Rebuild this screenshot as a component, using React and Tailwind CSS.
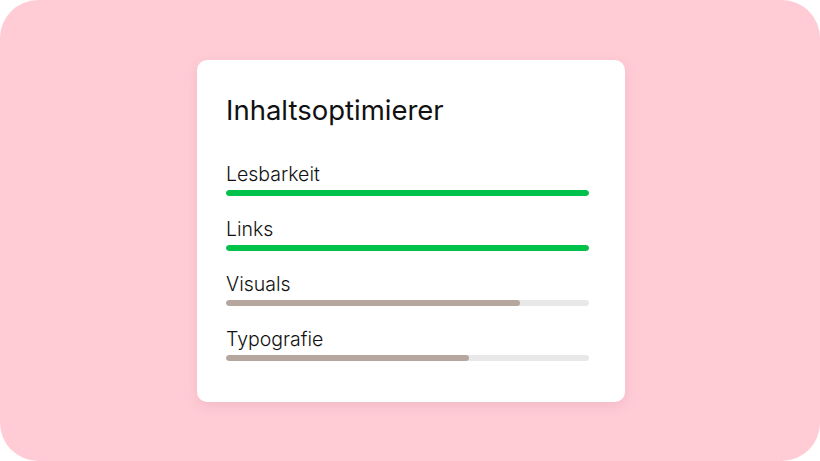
const ROWS = [
    { label: 'Lesbarkeit', value: 100, done: true },
    { label: 'Links', value: 100, done: true },
    { label: 'Visuals', value: 81, done: false },
    { label: 'Typografie', value: 67, done: false },
];

export default function App() {
    return (
        <div className="w-[820px] h-[461px] bg-white">
            <div className="w-full h-full bg-[#ffccd6] rounded-[38px] flex items-center justify-center font-['Inter',sans-serif]">
                <div className="w-[428px] h-[342px] ml-[2px] bg-white rounded-[10px] shadow-[0_4px_14px_rgba(180,110,125,0.18)] pt-[33px] pl-[29px] pr-[36px]">
                    <h1 className="text-[27.5px] leading-[34px] font-normal text-[#111]">
                        Inhaltsoptimierer
                    </h1>
                    <div className="mt-[35px] flex flex-col gap-[21px]">
                        {ROWS.map((r) => (
                            <div key={r.label}>
                                <div className="text-[19.5px] leading-[24px] font-light text-[#111]">{r.label}</div>
                                <div className="mt-[4px] h-[6px] rounded-full bg-[#e8e8e8] overflow-hidden">
                                    <div
                                        className={r.done ? 'h-full rounded-full bg-[#00c24a]' : 'h-full rounded-full bg-[#b5a69e]'}
                                        style={{ width: `${r.value}%` }}
                                    />
                                </div>
                            </div>
                        ))}
                    </div>
                </div>
            </div>
        </div>
    );
}
